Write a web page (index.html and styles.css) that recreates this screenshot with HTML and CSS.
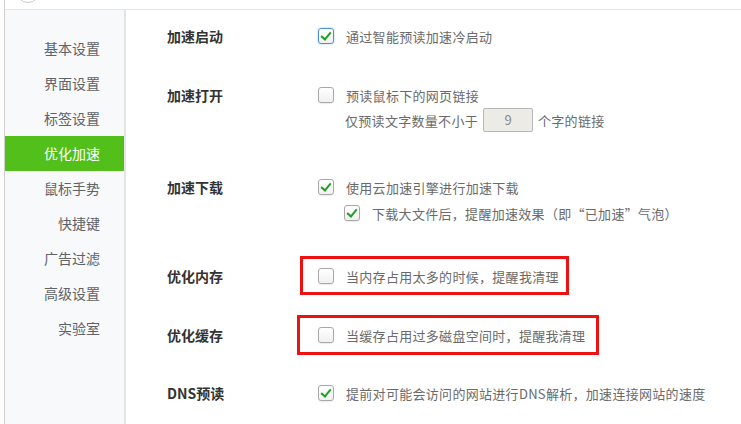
FILE: index.html
```html
<!DOCTYPE html>
<html lang="zh-CN">
<head>
  <meta charset="UTF-8" />
  <title>优化加速</title>
  <link rel="stylesheet" href="styles.css">
</head>
<body>
  <div class="window">
    <div class="topbar"><span class="logo"></span></div>
    <div class="panel">

      <!-- left menu -->
      <ul class="menu">
        <li>基本设置</li>
        <li>界面设置</li>
        <li>标签设置</li>
        <li class="active">优化加速</li>
        <li>鼠标手势</li>
        <li>快捷键</li>
        <li>广告过滤</li>
        <li>高级设置</li>
        <li>实验室</li>
      </ul>

      <!-- settings -->
      <div class="content">
        <div class="row r1">
          <div class="label">加速启动</div>
          <div class="opts">
            <div class="opt"><span class="cb on focus"></span>通过智能预读加速冷启动</div>
          </div>
        </div>

        <div class="row r2">
          <div class="label">加速打开</div>
          <div class="opts">
            <div class="opt"><span class="cb"></span>预读鼠标下的网页链接</div>
            <div class="opt sub-num">仅预读文字数量不小于 <span class="num">9</span> 个字的链接</div>
          </div>
        </div>

        <div class="row r3">
          <div class="label">加速下载</div>
          <div class="opts">
            <div class="opt"><span class="cb on"></span>使用云加速引擎进行加速下载</div>
            <div class="opt sub"><span class="cb on"></span>下载大文件后，提醒加速效果（即“已加速”气泡）</div>
          </div>
        </div>

        <div class="row r4">
          <div class="label">优化内存</div>
          <div class="opts">
            <div class="opt mark mark-mem"><span class="cb"></span>当内存占用太多的时候，提醒我清理</div>
          </div>
        </div>

        <div class="row r5">
          <div class="label">优化缓存</div>
          <div class="opts">
            <div class="opt mark mark-cache"><span class="cb"></span>当缓存占用过多磁盘空间时，提醒我清理</div>
          </div>
        </div>

        <div class="row r6">
          <div class="label">DNS预读</div>
          <div class="opts">
            <div class="opt"><span class="cb on"></span>提前对可能会访问的网站进行DNS解析，加速连接网站的速度</div>
          </div>
        </div>
      </div>

    </div>
  </div>
</body>
</html>
```

FILE: styles.css
```css
body {
  margin: 0;
  background: #fff;
  font-family: "Microsoft YaHei", "Noto Sans CJK SC", sans-serif;
  overflow: hidden;
}
.window {
  margin-left: 4px;
  border-left: 1px solid #cfcfcf;
  height: 424px;
  display: flex;
  flex-direction: column;
  overflow: hidden;
}
.topbar {
  flex: none;
  height: 9px;
  border-bottom: 1px solid #e6e6e6;
  overflow: hidden;
}
.logo {
  display: block;
  width: 22px;
  height: 22px;
  margin: -21px 0 0 11px;
  border: 1px solid #c8c8c8;
  border-radius: 50%;
}
.panel {
  flex: 1;
  min-height: 0;
  display: flex;
}

/* menu */
.menu {
  list-style: none;
  margin: 0;
  padding: 21px 0 0;
  width: 119px;
  background: #f7f9fb;
  border-right: 2px solid #e2e4e6;
}
.menu li {
  height: 35px;
  line-height: 35px;
  text-align: right;
  padding-right: 24px;
  font-size: 14px;
  color: #5f6266;
}
.menu li.active {
  background: #52bf1a;
  color: #fff;
}

/* settings */
.content {
  flex: 1;
  padding: 16px 0 0 41px;
}
.row {
  display: flex;
  margin-bottom: 39px;
}
.r2 { margin-bottom: 45px; }
.r3 { margin-bottom: 43px; }
.r5 { margin-bottom: 38px; }
.label {
  width: 151px;
  line-height: 20px;
  font-size: 14px;
  font-weight: bold;
  color: #333;
}
.opts {
  display: flex;
  flex-direction: column;
}
.opt {
  display: flex;
  align-items: center;
  height: 20px;
  font-size: 13px;
  letter-spacing: 0.3px;
  color: #6a6a6a;
}
.opt.sub {
  margin: 6px 0 0 26px;
}
.opt.sub-num {
  margin: 3px 0 0 27px;
  height: 24px;
}
.num {
  display: inline-block;
  width: 48px;
  height: 22px;
  line-height: 22px;
  margin: 0 5px;
  text-align: center;
  background: #ecebe6;
  border: 1px solid #b8b8b8;
  border-radius: 2px;
  color: #888;
  letter-spacing: 0;
}
.cb {
  position: relative;
  flex: none;
  width: 14px;
  height: 14px;
  margin-right: 12px;
  border: 1px solid #a8a8a8;
  border-radius: 3px;
  background: linear-gradient(#fff, #f1f1f1);
  box-shadow: 0 1px 1px rgba(0, 0, 0, 0.08);
}
.cb.focus {
  border-color: #4d8fd6;
  box-shadow: 0 0 2px #9cc3ee;
}
.cb.on::after {
  content: "";
  position: absolute;
  left: 4px;
  top: 1px;
  width: 4px;
  height: 8px;
  border: solid #23a023;
  border-width: 0 2px 2px 0;
  transform: rotate(40deg);
}

/* red annotation boxes */
.mark {
  position: relative;
}
.mark::before {
  content: "";
  position: absolute;
  border: 3px solid #ee1111;
}
.mark-mem::before {
  left: -18px;
  top: -10px;
  width: 263px;
  height: 33px;
}
.mark-cache::before {
  left: -21px;
  top: -10px;
  width: 296px;
  height: 34px;
}
```
